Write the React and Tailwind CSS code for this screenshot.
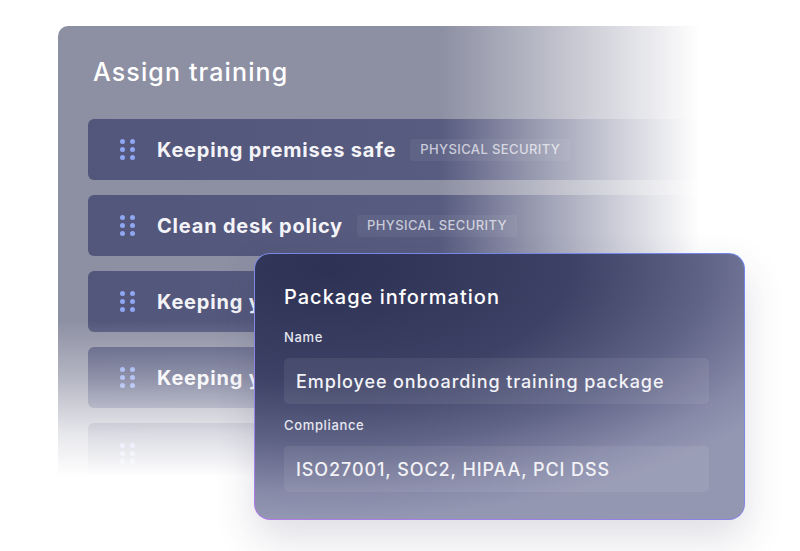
import React from 'react';

const rows = [
  { title: 'Keeping premises safe', tag: 'PHYSICAL SECURITY' },
  { title: 'Clean desk policy', tag: 'PHYSICAL SECURITY' },
  { title: 'Keeping your devices safe', tag: 'DEVICE SECURITY' },
  { title: 'Keeping your data safe', tag: 'DATA SECURITY' },
  { title: '', tag: '' },
];

function Dots() {
  return (
    <div className="grid grid-cols-2 gap-x-[5px] gap-y-[3px]">
      {[0, 1, 2, 3, 4, 5].map((i) => (
        <span key={i} className="w-[5px] h-[5px] rounded-full bg-[#8fa6f0]" />
      ))}
    </div>
  );
}

function Field({ label, value }) {
  return (
    <div>
      <div className="text-[13px] leading-[20px] font-medium text-[#e6e7f0] tracking-[0.05em]">{label}</div>
      <div className="mt-[11px] h-[46px] rounded-[5px] bg-white/[0.07] flex items-center px-[12px] text-[18px] font-medium text-[#f2f2f7] tracking-[0.05em] whitespace-nowrap">
        {value}
      </div>
    </div>
  );
}

export default function App() {
  return (
    <div
      className="relative w-[800px] h-[551px] bg-white overflow-hidden"
      style={{ fontFamily: 'Inter, "Noto Sans", sans-serif' }}
    >
      {/* back panel */}
      <div className="ml-[58px] mt-[26px] w-[680px] h-[470px] rounded-[10px] bg-[#8d8fa3] pt-[30px] px-[30px] overflow-hidden">
        <div className="pl-[5px] text-[25px] leading-[32px] font-medium text-white tracking-[0.045em]">Assign training</div>
        <div className="mt-[31px] flex flex-col gap-[15px]">
          {rows.map((r, i) => (
            <div
              key={i}
              className="h-[61px] rounded-[6px] bg-[linear-gradient(90deg,#52567a_0%,#585c80_60%,#6a6d8c_100%)] flex items-center pl-[32px]"
            >
              <Dots />
              <div className="ml-[22px] text-[20px] font-bold text-[#f4f4f8] tracking-[0.04em] whitespace-nowrap">{r.title}</div>
              {r.tag && (
                <div className="ml-[14px] px-[10px] h-[22px] flex items-center rounded-[3px] bg-white/[0.05] text-[13px] font-medium text-[#c9cbd9] tracking-[0.03em] whitespace-nowrap">
                  {r.tag}
                </div>
              )}
            </div>
          ))}
        </div>
      </div>

      {/* fades */}
      <div className="absolute left-[440px] top-0 w-[360px] h-[551px] bg-[linear-gradient(90deg,rgba(255,255,255,0)_0%,rgba(255,255,255,0.55)_40%,#ffffff_72%)]" />
      <div className="absolute left-0 top-[320px] w-[800px] h-[231px] bg-[linear-gradient(180deg,rgba(255,255,255,0)_0%,rgba(255,255,255,0.35)_25%,rgba(255,255,255,0.8)_50%,#ffffff_68%)]" />

      {/* package card */}
      <div className="absolute left-[254px] top-[253px] w-[491px] h-[267px] rounded-[16px] p-px bg-[linear-gradient(200deg,#6f86ee_0%,#7d88e0_50%,#b27ae8_100%)] shadow-[0_18px_40px_rgba(50,52,90,0.16)]">
        <div className="w-full h-full rounded-[15px] bg-[radial-gradient(110%_95%_at_15%_5%,#2d3154_0%,#3c4165_45%,#5f6386_70%,#878aa8_90%,#9497b2_100%)] pt-[29px] pl-[29px] pr-[35px]">
          <div className="text-[20px] leading-[28px] font-medium text-white tracking-[0.05em]">Package information</div>
          <div className="mt-[16px] flex flex-col gap-[11px]">
            <Field label="Name" value="Employee onboarding training package" />
            <Field label="Compliance" value="ISO27001, SOC2, HIPAA, PCI DSS" />
          </div>
        </div>
      </div>
    </div>
  );
}
